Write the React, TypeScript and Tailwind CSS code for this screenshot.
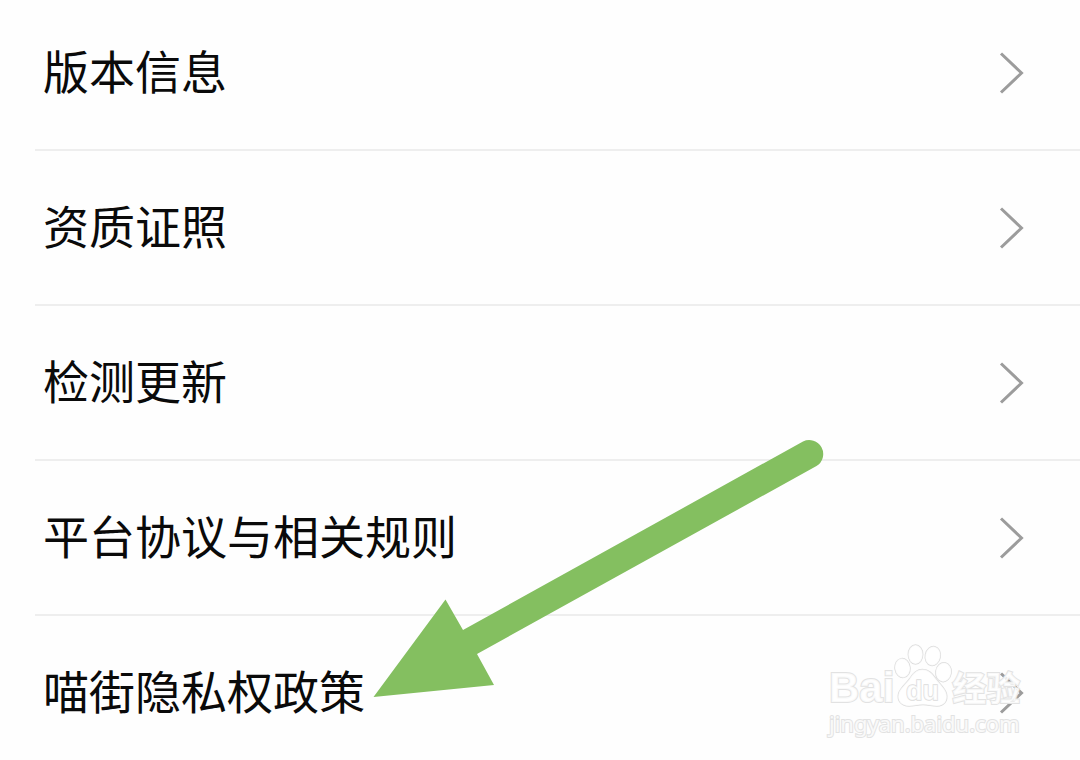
const items = [
  "版本信息",
  "资质证照",
  "检测更新",
  "平台协议与相关规则",
  "喵街隐私权政策",
];

function Chevron() {
  return (
    <svg
      className="h-11 w-7 shrink-0"
      viewBox="0 0 28 44"
      fill="none"
      stroke="#9c9c9c"
      strokeWidth="3"
      aria-hidden="true"
    >
      <path d="M3 2.5 L23.5 22 L3 41.5" />
    </svg>
  );
}

function Arrow() {
  return (
    <svg
      className="pointer-events-none absolute top-[436px] left-[370px] h-[264px] w-[458px]"
      viewBox="370 436 458 264"
      aria-hidden="true"
    >
      <path
        fill="#84bf60"
        d="M373.5 697 L445.5 599.5 L463 630 L803 441.5 A14 14 0 0 1 816.5 466 L477 654 L494 685 Z"
      />
    </svg>
  );
}

function Watermark() {
  return (
    <div className="pointer-events-none absolute top-[640px] left-[829px] font-['Liberation_Sans','Noto_Sans_CJK_SC',sans-serif] text-white/80 [paint-order:stroke_fill] [-webkit-text-stroke:2px_#e2e2e2]">
      <div className="flex h-[67px] items-end">
        <span className="text-[42px] leading-[38px] font-bold">Bai</span>
        <svg
          className="h-[67px] w-[58px] shrink-0"
          viewBox="0 0 58 67"
          fill="#ffffff"
          fillOpacity="0.8"
          stroke="#dcdcdc"
          strokeWidth="1.4"
          aria-hidden="true"
        >
          <ellipse cx="8.5" cy="28" rx="7.5" ry="9.5" transform="rotate(-8 8.5 28)" />
          <ellipse cx="21.5" cy="14.5" rx="7.2" ry="9.5" />
          <ellipse cx="38.8" cy="16" rx="7.5" ry="9.5" transform="rotate(12 38.8 16)" />
          <ellipse cx="49.5" cy="32.2" rx="7.7" ry="9.5" transform="rotate(8 49.5 32.2)" />
          <path d="M28.5 29.5 C22 29.5 18.5 34 15.5 39 C12 44 6 48 4.5 54 C3 61 7.5 66 15 66 C20 66 24 64.5 29 64.5 C34 64.5 38 66 43 66 C50 66 54 61 52.5 54 C51 48 45.5 44 42 39 C38.5 34 35 29.5 28.5 29.5 Z" />
          <text
            x="12"
            y="60"
            fontSize="27"
            fontWeight="700"
            className="[-webkit-text-stroke:1px_#dcdcdc]"
          >
            du
          </text>
        </svg>
        <span className="text-[34px] leading-[36px] font-bold">经验</span>
      </div>
      <div className="font-['Noto_Sans',sans-serif] text-[22px] leading-8">
        jingyan.baidu.com
      </div>
    </div>
  );
}

export default function App() {
  return (
    <main className="relative min-h-screen overflow-hidden bg-[#fefefe] font-['Noto_Sans_CJK_SC',sans-serif]">
      <ul className="-mt-1 pl-[35px]">
        {items.map((label) => (
          <li key={label} className="border-b-2 border-[#eeeeee] last:border-b-0">
            <a
              href="#"
              className="flex h-[153px] items-center justify-between pr-[54px] pl-2 text-[46px] text-[#0a0a0a]"
            >
              <span className="pb-1.5">{label}</span>
              <Chevron />
            </a>
          </li>
        ))}
      </ul>
      <Arrow />
      <Watermark />
    </main>
  );
}
